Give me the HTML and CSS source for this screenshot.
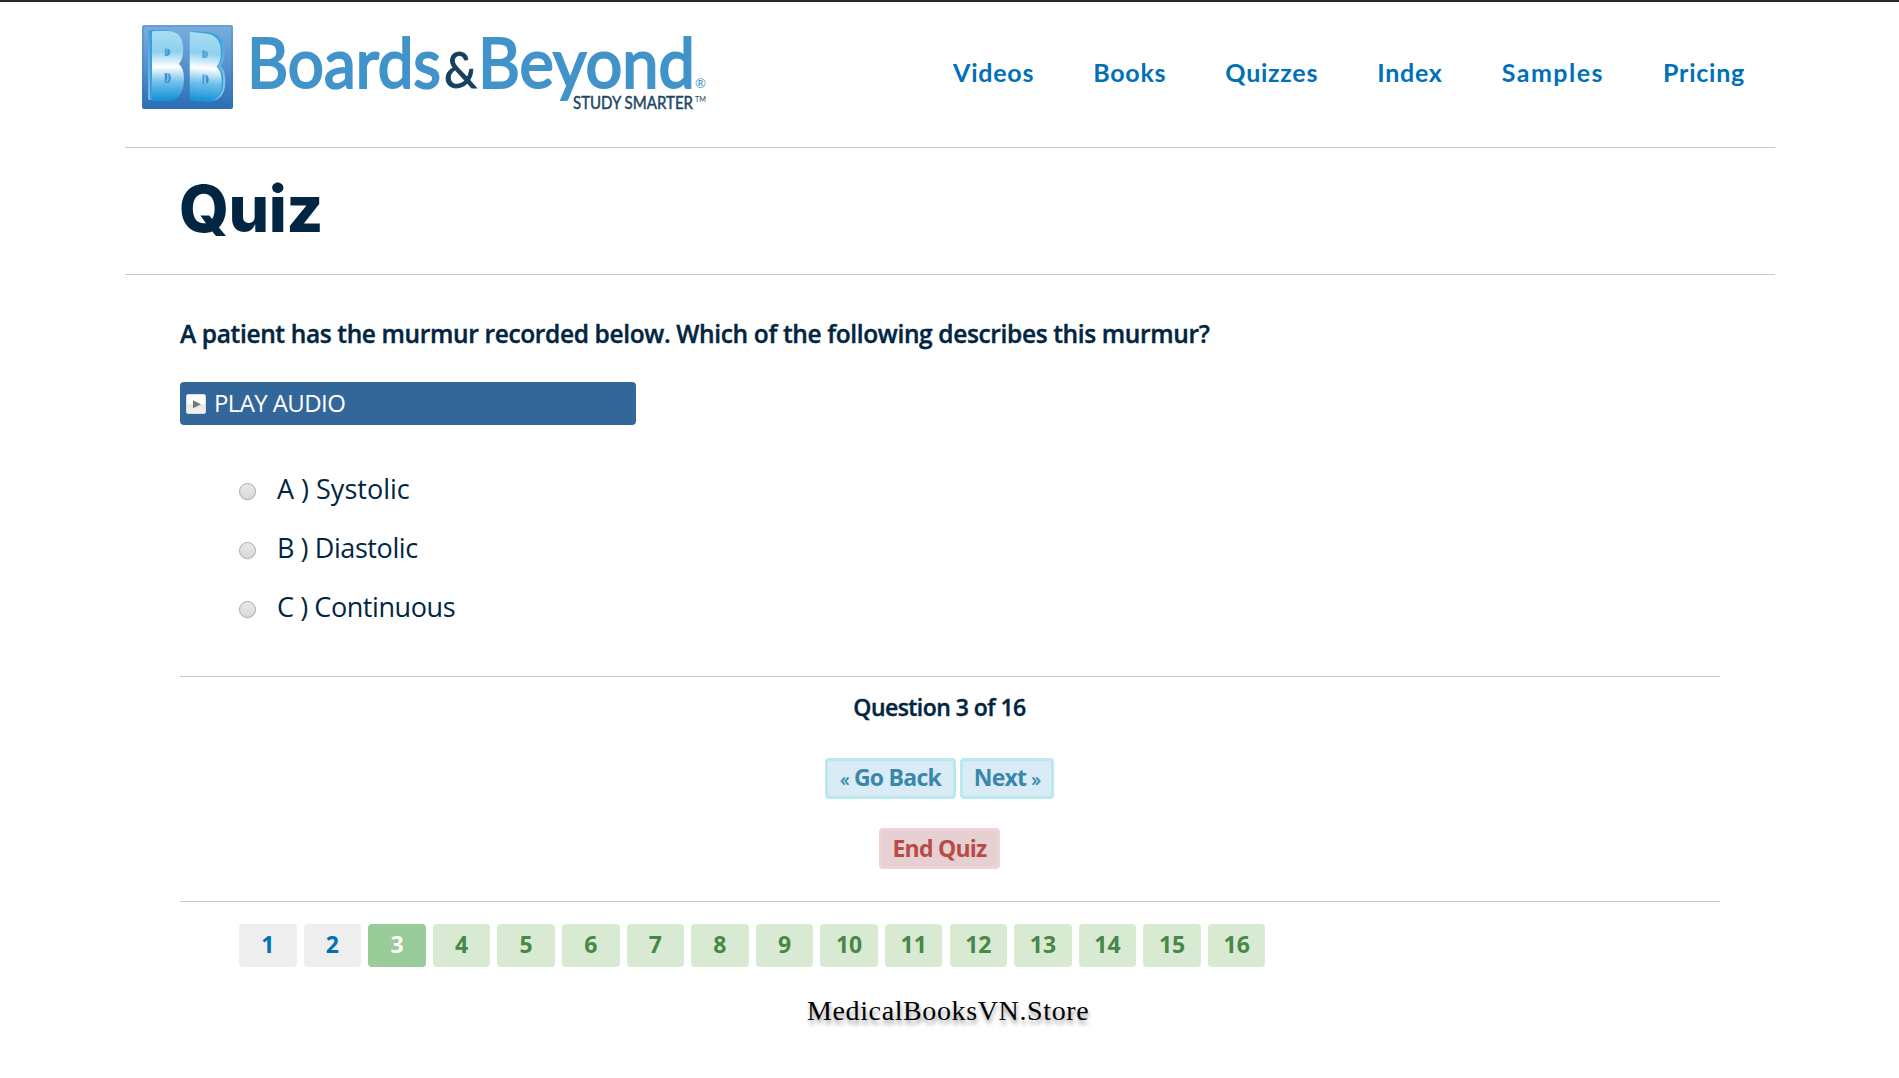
FILE: index.html
```html
<!DOCTYPE html>
<html lang="en">
<head>
<meta charset="utf-8">
<title>Quiz - Boards &amp; Beyond</title>
<link rel="stylesheet" href="styles.css">
</head>
<body>
<div class="page">
  <header class="header">
    <svg class="logo" width="570" height="90" viewBox="140 23 570 90" role="img" aria-label="Boards and Beyond">
      <defs>
        <linearGradient id="tile" x1="0" y1="0" x2="0" y2="1"><stop offset="0" stop-color="#7aaede"/><stop offset=".5" stop-color="#5490ce"/><stop offset="1" stop-color="#2a6cb4"/></linearGradient>
        <linearGradient id="face" gradientUnits="userSpaceOnUse" x1="0" y1="-51" x2="0" y2="0"><stop offset="0" stop-color="#a6def2"/><stop offset=".3" stop-color="#8fd0ee"/><stop offset=".52" stop-color="#ffffff"/><stop offset=".75" stop-color="#6fc0ea"/><stop offset="1" stop-color="#1c95d8"/></linearGradient>
        <linearGradient id="side" gradientUnits="userSpaceOnUse" x1="0" y1="-51" x2="0" y2="0"><stop offset="0" stop-color="#3fa5dd"/><stop offset=".6" stop-color="#79bfe8"/><stop offset="1" stop-color="#82cdef"/></linearGradient>
      </defs>
      <rect x="142" y="25" width="91" height="84" rx="2" fill="url(#tile)"/>
      <rect x="143" y="26" width="89" height="82" rx="1" fill="none" stroke="#3e78b9" stroke-opacity=".55"/>
      <g class="monogram">
        <g transform="translate(146 99) scale(.77 1.32)"><text class="side" x="-1" y="-1">B</text><text class="edge" x="1" y="-.5">B</text><text class="face" x="4" y="0">B</text></g>
        <g transform="translate(186 98) scale(.77 1.29) skewY(3)"><text class="side" x="6" y="-1">B</text><text class="edge" x="3" y="-.5">B</text><text class="face" x="1" y="0">B</text></g>
      </g>
      <text class="word" x="247" y="87.5" textLength="194" lengthAdjust="spacingAndGlyphs">Boards</text>
      <text class="amp" x="444" y="87.5" textLength="33" lengthAdjust="spacingAndGlyphs">&amp;</text>
      <text class="word" x="478" y="87.5" textLength="217" lengthAdjust="spacingAndGlyphs">Beyond</text>
      <text class="reg" x="695" y="88" textLength="11" lengthAdjust="spacingAndGlyphs">®</text>
      <text class="tag" x="573" y="109" textLength="120" lengthAdjust="spacingAndGlyphs">STUDY SMARTER</text>
      <text class="tm" x="695" y="102" textLength="11" lengthAdjust="spacingAndGlyphs">TM</text>
    </svg>
    <nav class="nav">
      <a>Videos</a><a>Books</a><a>Quizzes</a><a>Index</a><a class="samples">Samples</a><a>Pricing</a>
    </nav>
  </header>
  <div class="title-row"><h1>Quiz</h1></div>
  <main class="content">
    <p class="question">A patient has the murmur recorded below. Which of the following describes this murmur?</p>
    <div class="play">
      <svg width="20" height="20" viewBox="0 0 20 20"><defs><linearGradient id="key" x1="0" y1="0" x2="0" y2="1"><stop offset=".5" stop-color="#fff"/><stop offset=".55" stop-color="#e6e6e6"/><stop offset="1" stop-color="#f5f5f5"/></linearGradient></defs><rect x=".5" y=".5" width="19" height="19" rx="1.5" fill="url(#key)" stroke="#d5dbe2"/><path d="M7 6.3 15 10.3 7 14.3Z" fill="#777"/></svg>
      <span>PLAY AUDIO</span>
    </div>
    <div class="answers">
      <label><i class="radio"></i><span>A ) Systolic</span></label>
      <label><i class="radio"></i><span class="tight">B ) Diastolic</span></label>
      <label><i class="radio"></i><span class="tight">C ) Continuous</span></label>
    </div>
    <section class="controls">
      <div class="progress">Question 3 of 16</div>
      <div class="steps"><button class="btn back"><small>«</small> Go Back</button><button class="btn next">Next <small>»</small></button></div>
      <button class="btn end">End Quiz</button>
    </section>
    <div class="pages">
      <a class="seen">1</a><a class="seen">2</a><a class="current">3</a><a>4</a><a>5</a><a>6</a><a>7</a><a>8</a><a>9</a><a>10</a><a>11</a><a>12</a><a>13</a><a>14</a><a>15</a><a>16</a>
    </div>
  </main>
  <footer class="footer">MedicalBooksVN.Store</footer>
</div>
</body>
</html>
```
FILE: styles.css
```css
* { box-sizing: border-box; }
body { margin: 0; height: 1078px; overflow: hidden; background: #fff; border-top: 2px solid #2b282a; color: #022641; font-family: "Open Sans", sans-serif; }
.page { width: 1650px; margin-left: 125px; white-space: nowrap; }
.header { height: 146px; display: flex; justify-content: space-between; border-bottom: 1px solid #c8c8c8; padding: 21px 30px 0 15px; }
.logo { display: block; }
.monogram text { font: 800 70px "Open Sans", sans-serif; stroke-width: 3; stroke-linejoin: round; }
.face { fill: url(#face); stroke: url(#face); }
.edge { fill: #3c9fda; stroke: #3c9fda; }
.side { fill: url(#side); stroke: url(#side); }
.word { font: 400 70px Lato, sans-serif; fill: #4193c9; stroke: #4193c9; stroke-width: 2.2; }
.amp { font: 400 51px Lato, sans-serif; fill: #173f5e; stroke: #173f5e; stroke-width: 1; }
.reg { font: 400 13px Lato, sans-serif; fill: #4193c9; }
.tag { font: 400 17px Lato, sans-serif; fill: #1d4865; stroke: #1d4865; stroke-width: .5; }
.tm { font: 400 7px Lato, sans-serif; fill: #1d4865; }
.nav { display: flex; gap: 59px; padding-top: 34px; font: 700 25px/30px Lato, sans-serif; letter-spacing: .75px; color: #0070b8; }
.samples { letter-spacing: 1.5px; }
.title-row { height: 127px; padding: 21px 55px 0; border-bottom: 1px solid #c8c8c8; }
h1 { margin: 0 0 0 -1px; font: 800 64px/80px Inter, sans-serif; letter-spacing: -.5px; color: #022641; }
.content { padding: 0 55px; }
.question { margin: 0; padding-top: 42px; height: 107px; font-weight: 600; font-size: 24.5px; line-height: 34px; letter-spacing: -.36px; -webkit-text-stroke: .4px; }
.play { width: 456px; height: 43px; border-radius: 4px; background: #336699; color: #fff; display: flex; align-items: center; gap: 8px; padding-left: 6px; font-size: 24px; line-height: 43px; letter-spacing: -.6px; }
.play span { padding-bottom: 3px; }
.play svg { flex: none; }
.answers { height: 251px; padding: 36px 0 0 59px; }
.answers label { display: flex; align-items: center; gap: 21px; height: 59px; font-size: 27px; }
.answers span { padding-bottom: 4px; }
.answers .tight { letter-spacing: -.42px; }
.radio { width: 17px; height: 17px; border-radius: 50%; border: 1px solid #aaa; background: linear-gradient(#e9e9e9, #d9d9d9); margin-top: 1px; box-shadow: 0 1px 1px #eee; }
.controls { height: 226px; border: solid #c8c8c8; border-width: 1px 0; display: flex; flex-direction: column; align-items: center; padding: 13px 21px 0 0; }
.progress { height: 68px; font-weight: 600; font-size: 23px; line-height: 34px; letter-spacing: -.55px; -webkit-text-stroke: .4px; }
.steps { display: flex; gap: 4px; margin-bottom: 29px; }
.btn { height: 41px; padding: 0; border: 3px solid #bae8ef; border-radius: 4px; background: #d9ecf6; color: #3a87ad; font: 700 23px/33px "Open Sans", sans-serif; letter-spacing: -.75px; }
.btn small { font-size: 19px; font-weight: 400; -webkit-text-stroke: .4px; }
.back { width: 131px; }
.next { width: 94px; }
.end { width: 121px; border-color: #eed3d7; background: #e6d0d1; color: #b94a48; }
.pages { display: flex; gap: 7.05px; padding: 22px 0 0 59px; }
.pages a { width: 57.55px; height: 43px; border-radius: 4px; background: #d9ead3; color: #468847; font-weight: 700; font-size: 23px; line-height: 41px; text-align: center; }
.pages .seen { background: #eee; color: #0070b8; }
.pages .current { background: #99cc99; color: #fff; }
.footer { margin-top: 27px; padding-left: 682px; font: 28px/34px "Palatino Linotype", "Liberation Serif", serif; letter-spacing: .62px; color: #000; text-shadow: 1px 4px 4px rgba(0,0,0,.4); }
```
